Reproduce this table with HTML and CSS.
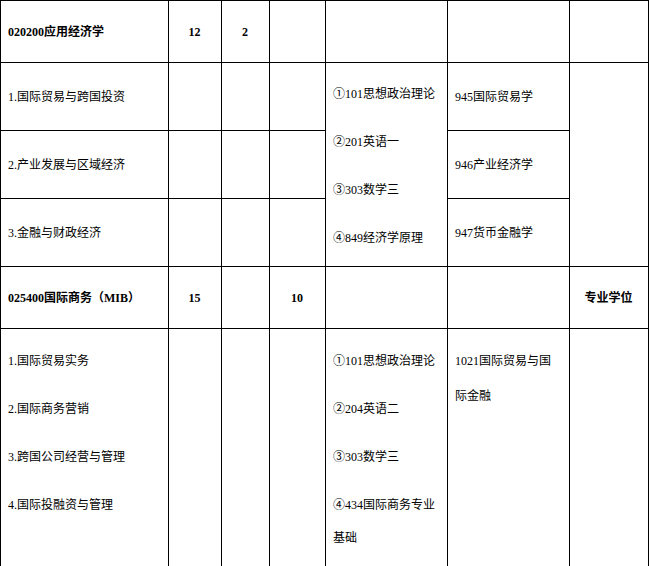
FILE: index.html
```html
<!DOCTYPE html>
<html lang="zh">
<head>
<meta charset="utf-8">
<title>招生专业目录</title>
<link rel="stylesheet" href="styles.css">
</head>
<body>
<table class="catalog">
  <colgroup>
    <col class="c-major">
    <col class="c-n1">
    <col class="c-n2">
    <col class="c-n3">
    <col class="c-exam">
    <col class="c-subj">
    <col class="c-note">
  </colgroup>
  <tbody>
    <tr class="r-head">
      <td class="bold">020200应用经济学</td>
      <td class="bold center">12</td>
      <td class="bold center">2</td>
      <td></td>
      <td></td>
      <td></td>
      <td></td>
    </tr>
    <tr class="r-dir">
      <td>1.国际贸易与跨国投资</td>
      <td></td>
      <td></td>
      <td></td>
      <td rowspan="3" class="list list-mid">
        <p>①101思想政治理论</p>
        <p>②201英语一</p>
        <p>③303数学三</p>
        <p>④849经济学原理</p>
      </td>
      <td>945国际贸易学</td>
      <td rowspan="3"></td>
    </tr>
    <tr class="r-dir">
      <td>2.产业发展与区域经济</td>
      <td></td>
      <td></td>
      <td></td>
      <td>946产业经济学</td>
    </tr>
    <tr class="r-dir">
      <td>3.金融与财政经济</td>
      <td></td>
      <td></td>
      <td></td>
      <td>947货币金融学</td>
    </tr>
    <tr class="r-head">
      <td class="bold">025400国际商务（MIB）</td>
      <td class="bold center">15</td>
      <td></td>
      <td class="bold center">10</td>
      <td></td>
      <td></td>
      <td class="bold center">专业学位</td>
    </tr>
    <tr class="r-last">
      <td class="list">
        <p>1.国际贸易实务</p>
        <p>2.国际商务营销</p>
        <p>3.跨国公司经营与管理</p>
        <p>4.国际投融资与管理</p>
      </td>
      <td></td>
      <td></td>
      <td></td>
      <td class="list">
        <p>①101思想政治理论</p>
        <p>②204英语二</p>
        <p>③303数学三</p>
        <p>④434国际商务专业基础</p>
      </td>
      <td class="list list-wide">
        <p>1021国际贸易与国际金融</p>
      </td>
      <td></td>
    </tr>
  </tbody>
</table>
</body>
</html>
```
FILE: styles.css
```css
html, body {
  margin: 0;
  padding: 0;
  background: #ffffff;
}

body {
  font-family: "Liberation Serif", "Noto Sans CJK SC", serif;
  font-size: 12px;
  color: #000000;
}

.catalog {
  border-collapse: collapse;
  table-layout: fixed;
  width: 648px;
}

.c-major { width: 168px; }
.c-n1 { width: 53px; }
.c-n2 { width: 48px; }
.c-n3 { width: 56px; }
.c-exam { width: 122px; }
.c-subj { width: 122px; }
.c-note { width: 79px; }

.catalog td {
  border: 1px solid #000000;
  padding: 0 8px 0 7px;
  vertical-align: middle;
  line-height: 16px;
  word-break: break-all;
}

.r-head td { height: 61px; }
.r-dir td { height: 67px; }

.r-last td {
  vertical-align: top;
  padding-top: 16px;
  padding-bottom: 40px;
}

.bold { font-weight: bold; }
.center { text-align: center; }

.list p {
  margin: 0 0 15px 0;
  line-height: 33px;
}

.list p:last-child { margin-bottom: 0; }

.catalog td.list-mid { padding-top: 4px; }

.catalog td.list-wide { padding-top: 15px; }

.list-wide p { line-height: 35px; }
```
